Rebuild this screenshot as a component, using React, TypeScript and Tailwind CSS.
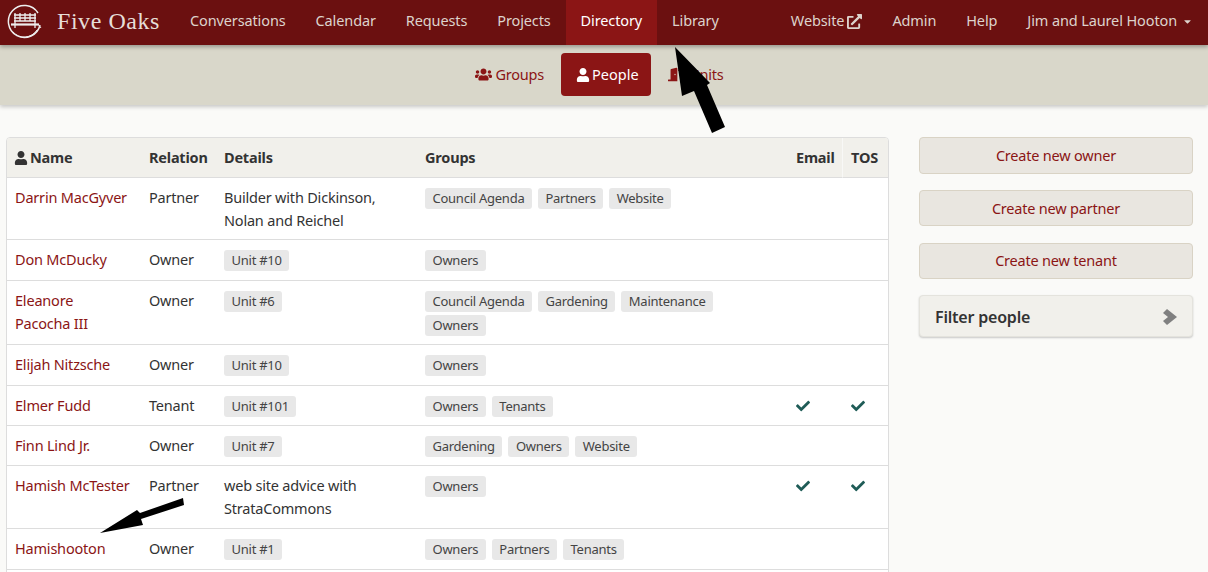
import { FaUser, FaUsers, FaDoorOpen, FaCheck, FaCaretDown, FaExternalLinkAlt } from "react-icons/fa";

const navLeft = ["Conversations", "Calendar", "Requests", "Projects", "Directory", "Library"];

interface Person {
  name: string[];
  relation: string;
  details?: string[];
  unit?: string;
  groups: string[];
  email?: boolean;
  tos?: boolean;
  rowClass: string;
}

const people: Person[] = [
  { name: ["Darrin MacGyver"], relation: "Partner", details: ["Builder with Dickinson,", "Nolan and Reichel"], groups: ["Council Agenda", "Partners", "Website"], rowClass: "h-[62px]" },
  { name: ["Don McDucky"], relation: "Owner", unit: "Unit #10", groups: ["Owners"], rowClass: "h-[41px]" },
  { name: ["Eleanore", "Pacocha III"], relation: "Owner", unit: "Unit #6", groups: ["Council Agenda", "Gardening", "Maintenance", "Owners"], rowClass: "h-[64px]" },
  { name: ["Elijah Nitzsche"], relation: "Owner", unit: "Unit #10", groups: ["Owners"], rowClass: "h-[41px]" },
  { name: ["Elmer Fudd"], relation: "Tenant", unit: "Unit #101", groups: ["Owners", "Tenants"], email: true, tos: true, rowClass: "h-[40px]" },
  { name: ["Finn Lind Jr."], relation: "Owner", unit: "Unit #7", groups: ["Gardening", "Owners", "Website"], rowClass: "h-[40px]" },
  { name: ["Hamish McTester"], relation: "Partner", details: ["web site advice with", "StrataCommons"], groups: ["Owners"], email: true, tos: true, rowClass: "h-[63px]" },
  { name: ["Hamishooton"], relation: "Owner", unit: "Unit #1", groups: ["Owners", "Partners", "Tenants"], rowClass: "h-[41px]" },
];

function Tag({ label }: { label: string }) {
  return (
    <span className="block h-[21px] w-fit rounded-[3px] bg-[#e8e8e8] px-[7.5px] text-[13px] leading-[21px] tracking-[-0.25px] text-[#444]">
      {label}
    </span>
  );
}

function BenchLogo() {
  return (
    <svg width="36" height="36" viewBox="0 0 36 36" fill="none" stroke="#eee" className="shrink-0">
      <path d="M32 10A16 16 0 1 0 34 22" strokeWidth="1.5" />
      <path d="M7 29A15 15 0 0 0 31 27" strokeWidth="1" />
      <path d="M8 12h22M8 15h22M8 18h22" strokeWidth="1.5" />
      <path d="M5 21.5h28" strokeWidth="2.2" />
      <path d="M9 10v15M29 10v15M14 10v8M19 10v8M24 10v8" strokeWidth="1.3" />
      <path d="M32 21l3 4" strokeWidth="1" />
    </svg>
  );
}

export default function App() {
  return (
    <div className="relative h-[572px] w-[1208px] overflow-hidden bg-[#fafaf8] font-['Noto_Sans',sans-serif] text-[14.5px] tracking-[-0.2px] text-[#333]">
      <nav className="relative z-10 flex h-[45px] items-stretch bg-[#6b1010] pb-[3px] tracking-[-0.12px] text-[#ddd3cc] shadow-[0_2px_4px_rgba(0,0,0,0.3)]">
        <div className="flex items-center pl-[6px]">
          <BenchLogo />
          <span className="ml-[15px] mr-[15px] font-['Liberation_Serif',serif] text-[24px] tracking-[0.55px] text-[#e6ded8]">Five Oaks</span>
        </div>
        {navLeft.map((item) => (
          <a
            key={item}
            className={`-mb-[3px] flex items-center px-[15px] pb-[3px] ${item === "Directory" ? "bg-[#8b1515] text-white" : ""}`}
          >
            {item}
          </a>
        ))}
        <div className="ml-auto flex items-stretch pr-[15px]">
          <a className="flex items-center gap-[3px] px-[15px]">
            Website <FaExternalLinkAlt size={15} />
          </a>
          <a className="flex items-center px-[15px]">Admin</a>
          <a className="flex items-center px-[15px]">Help</a>
          <a className="flex items-center gap-[5px] pl-[15px]">
            Jim and Laurel Hooton <FaCaretDown size={11} />
          </a>
        </div>
      </nav>

      <div className="flex h-[60px] items-center justify-center gap-[2px] bg-[#d9d7ca] pb-[1px] text-[#8b1515] shadow-[0_2px_4px_rgba(0,0,0,0.2)]">
        <a className="flex h-[43px] items-center gap-[3px] px-[15px]">
          <FaUsers size={17} /> Groups
        </a>
        <a className="flex h-[43px] w-[90px] items-center gap-[2px] rounded-[4px] bg-[#8b1515] pl-[15px] tracking-normal text-white">
          <FaUser size={14} /> People
        </a>
        <a className="flex h-[43px] items-center gap-[4px] pl-[15px] pr-[24px]">
          <FaDoorOpen size={17} /> Units
        </a>
      </div>

      <div className="flex items-start gap-[30px] pl-[6px] pt-[32px]">
        <table className="w-[883px] table-fixed border-separate border-spacing-0 overflow-hidden rounded-[4px] border border-[#ddd] bg-white">
          <colgroup>
            <col className="w-[134px]" />
            <col className="w-[75px]" />
            <col className="w-[201px]" />
            <col className="w-[371px]" />
            <col className="w-[55px]" />
            <col />
          </colgroup>
          <thead>
            <tr className="h-[40px] bg-[#f1f0eb] text-left font-bold">
              <th className="border-b border-[#ddd] px-2">
                <span className="-ml-px flex items-center gap-[2px]"><FaUser size={14} /> Name</span>
              </th>
              <th className="border-b border-[#ddd] px-2">Relation</th>
              <th className="border-b border-[#ddd] px-2">Details</th>
              <th className="border-b border-[#ddd] px-2">Groups</th>
              <th className="border-b border-r border-[#ddd] border-r-[#f8f8f6] px-2">Email</th>
              <th className="border-b border-[#ddd] px-2">TOS</th>
            </tr>
          </thead>
          <tbody>
            {people.map((p) => (
              <tr key={p.name[0]} className={p.rowClass}>
                <td className="border-b border-[#ddd] px-2 align-top pt-[8px] leading-[23px] text-[#8b1515]">
                  {p.name.map((n) => <div key={n}>{n}</div>)}
                </td>
                <td className="border-b border-[#ddd] px-2 align-top pt-[8px] leading-[23px]">{p.relation}</td>
                <td className={`border-b border-[#ddd] px-2 align-top leading-[23px] ${p.unit ? "pt-[10px]" : "pt-[8px]"}`}>
                  {p.details && p.details.map((d) => <div key={d}>{d}</div>)}
                  {p.unit && <Tag label={p.unit} />}
                </td>
                <td className="border-b border-[#ddd] px-2 align-top pt-[10px]">
                  <div className="flex max-w-[300px] flex-wrap gap-x-[6px] gap-y-[3px]">
                    {p.groups.map((g) => <Tag key={g} label={g} />)}
                  </div>
                </td>
                <td className="border-b border-[#ddd] px-2 align-top pt-[13px] text-[#1f5c57]">
                  {p.email && <FaCheck size={14} />}
                </td>
                <td className="border-b border-[#ddd] px-2 align-top pt-[13px] text-[#1f5c57]">
                  {p.tos && <FaCheck size={14} />}
                </td>
              </tr>
            ))}
            <tr className="h-[41px]"><td colSpan={6} /></tr>
          </tbody>
        </table>

        <aside className="flex w-[274px] flex-col">
          {["Create new owner", "Create new partner", "Create new tenant"].map((label) => (
            <a
              key={label}
              className="mb-[16.2px] flex h-[36.6px] items-center justify-center rounded-[4px] border border-[#d9d3c5] bg-[#e9e6e0] pt-[1px] text-[#8b1515]"
            >
              {label}
            </a>
          ))}
          <div className="flex h-[42px] items-center justify-between rounded-[4px] border border-[#e4e3dd] bg-[#f1f0eb] pl-[15px] pr-[15px] pt-[2px] text-[16px] font-semibold shadow-[0_1px_2px_rgba(0,0,0,0.2)]">
            Filter people
            <svg width="14" height="16" viewBox="0 0 14 16" fill="#808080">
              <polygon points="0,4 4,0 14,8 4,16 0,12 5,8" />
            </svg>
          </div>
        </aside>
      </div>

      {/* annotation arrows pasted over the screenshot */}
      <svg width="1208" height="572" className="pointer-events-none absolute left-0 top-0 z-20">
        <polygon points="675,47 682,96 694,91 712,133 725,127 707,85 710,83" fill="#000" />
        <polygon points="100,533 143,525 141,519 184,505 183,498 140,513 137,510" fill="#000" />
      </svg>
    </div>
  );
}
